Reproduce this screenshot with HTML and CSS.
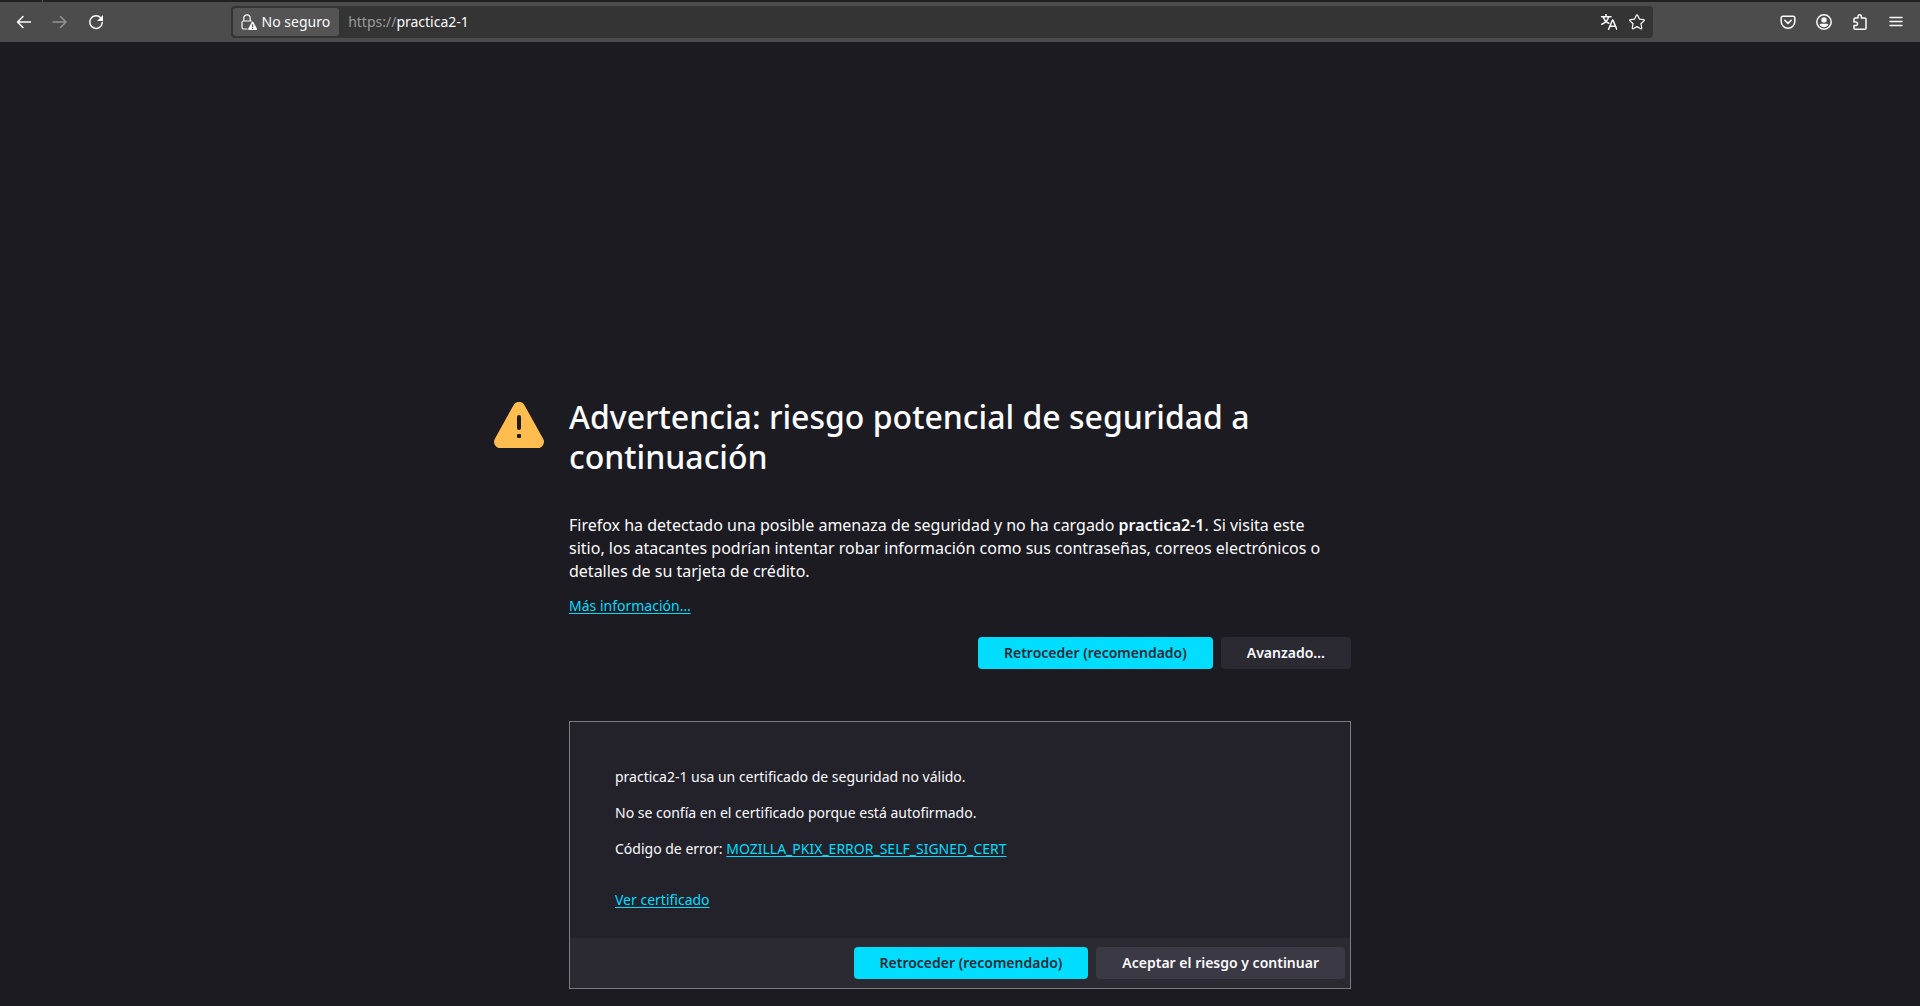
FILE: index.html
```html
<!DOCTYPE html>
<html lang="es">
<head>
<meta charset="utf-8">
<title>Advertencia: riesgo potencial de seguridad a continuación</title>
<link rel="stylesheet" href="styles.css">
</head>
<body>
<div class="tab-edge"></div>
<header class="toolbar">
  <nav class="nav-buttons" aria-label="Navegación">
    <button class="icon-button" type="button" aria-label="Atrás">
      <svg viewBox="0 0 16 16"><path class="line" d="M14.500 8H1.500M7 2.500 1.500 8 7 13.500"/></svg>
    </button>
    <button class="icon-button" type="button" aria-label="Adelante" disabled>
      <svg viewBox="0 0 16 16"><path class="line" d="M1 8h13M8.500 2.500 14 8l-5.500 5.500"/></svg>
    </button>
    <button class="icon-button" type="button" aria-label="Recargar">
      <svg viewBox="0 0 16 16"><path class="line" d="M12.800 4A6.300 6.300 0 1 0 14.300 8.500"/><path d="M15 1v5.400a.6.600 0 0 1-.6.600H9z"/></svg>
    </button>
  </nav>
  <div class="urlbar">
    <button class="identity" type="button">
      <svg viewBox="0 0 16 16"><path class="line thin" d="M6 15H2.500A1.500 1.500 0 0 1 1 13.500V8.500A1.500 1.500 0 0 1 2.500 7h7.800M2.800 7V4a3.200 3.200 0 0 1 6.400 0V7"/><path fill-rule="evenodd" d="M10.800 8.100a.9.900 0 0 1 1.600 0l3.500 6.500a.9.900 0 0 1-.8 1.300H8.100a.9.900 0 0 1-.8-1.300zM11 10.300v2.700h1.200v-2.700zm0 3.500v1.200h1.200v-1.200z"/></svg>
      <span>No seguro</span>
    </button>
    <div class="address"><span class="scheme">https://</span>practica2-1</div>
    <button class="icon-button small" type="button" aria-label="Traducir">
      <svg viewBox="0 0 16 16"><path class="line" d="M0 2.700h10M5 .2v2.500M7.700 2.700C7 6 4.500 8.800.8 10.200M2.300 2.700C3 5.500 5 8 7.700 9.300M7.500 15.500 11.500 6h.4l4 9.500M9 12.300h5.500"/></svg>
    </button>
    <button class="icon-button small" type="button" aria-label="Añadir a marcadores">
      <svg viewBox="0 0 16 16"><path class="line thin" d="M7.400 1.200a.7.700 0 0 1 1.200 0l1.800 3.900 4.300.5a.7.700 0 0 1 .4 1.200l-3.200 2.900.9 4.300a.7.700 0 0 1-1 .7L8 12.600l-3.800 2.100a.7.700 0 0 1-1-.7l.9-4.300L.9 6.800a.7.700 0 0 1 .4-1.200l4.300-.5z"/></svg>
    </button>
  </div>
  <div class="tools">
    <button class="icon-button" type="button" aria-label="Guardar en Pocket">
      <svg viewBox="0 0 16 16"><path class="line" d="M2.800 2.200h10.400a1.600 1.600 0 0 1 1.600 1.600v3.700a6.800 6.800 0 0 1-13.600 0V3.800a1.600 1.600 0 0 1 1.600-1.600zM4.800 6.300 8 9.400l3.200-3.100"/></svg>
    </button>
    <button class="icon-button" type="button" aria-label="Cuenta">
      <svg viewBox="0 0 16 16"><circle class="line" cx="8" cy="8" r="7.200"/><circle cx="8" cy="5.900" r="2.700"/><path d="M4.500 9.800h7a.8.800 0 0 1 .8.900C11.500 12.300 10 13.200 8 13.200s-3.500-.9-4.300-2.500a.8.800 0 0 1 .8-.9z"/></svg>
    </button>
    <button class="icon-button" type="button" aria-label="Extensiones">
      <svg viewBox="0 0 16 16"><path class="line" d="M2 7V5.200A1.200 1.200 0 0 1 3.200 4H6V2.500a1.700 1.700 0 0 1 3.400 0V4h3.400A1.200 1.200 0 0 1 14 5.200v9a1 1 0 0 1-1 1H3a1 1 0 0 1-1-1V11.500h1.700a1.800 1.800 0 0 0 0-3.600H2z"/></svg>
    </button>
    <button class="icon-button" type="button" aria-label="Menú">
      <svg viewBox="0 0 16 16"><path class="line" d="M2 3.500h12M2 7.500h12M2 11.500h12"/></svg>
    </button>
  </div>
</header>
<main class="page">
  <svg class="warning" viewBox="0 0 50 46" role="img" aria-label="Advertencia"><path fill="#ffbd4f" d="M19.500 3.200a6.200 6.200 0 0 1 11 0l18.600 33.500A6.200 6.200 0 0 1 43.700 46H6.300a6.200 6.200 0 0 1-5.400-9.300z"/><path stroke="#1c1b22" stroke-width="4" stroke-linecap="round" d="M25 15v11"/><rect x="23" y="32" width="4" height="4" rx="1" fill="#1c1b22"/></svg>
  <div class="column">
    <h1>Advertencia: riesgo potencial de seguridad a continuación</h1>
    <p class="intro">Firefox ha detectado una posible amenaza de seguridad y no ha cargado <b>practica2-1</b>. Si visita este sitio, los atacantes podrían intentar robar información como sus contraseñas, correos electrónicos o detalles de su tarjeta de crédito.</p>
    <p class="more"><a href="#info">Más información…</a></p>
    <div class="actions">
      <button class="button primary" type="button">Retroceder (recomendado)</button>
      <button class="button" type="button">Avanzado…</button>
    </div>
    <section class="advanced">
      <div class="details">
        <p>practica2-1 usa un certificado de seguridad no válido.</p>
        <p>No se confía en el certificado porque está autofirmado.</p>
        <p>Código de error: <a href="#error">MOZILLA_PKIX_ERROR_SELF_SIGNED_CERT</a></p>
        <p class="certificate"><a href="#certificado">Ver certificado</a></p>
      </div>
      <div class="actions footer">
        <button class="button primary" type="button">Retroceder (recomendado)</button>
        <button class="button" type="button">Aceptar el riesgo y continuar</button>
      </div>
    </section>
  </div>
</main>
</body>
</html>
```
FILE: styles.css
```css
* { box-sizing: border-box; }

body {
  margin: 0;
  background: #1c1b22;
  color: #fbfbfe;
  font: 14px/22px "Noto Sans", sans-serif;
}

button {
  font: inherit;
  color: inherit;
  border: 0;
  padding: 0;
}

.tab-edge {
  height: 2px;
  background: linear-gradient(90deg, #202020 42px, #606060 42px 43px, #202020 43px);
}

.toolbar {
  display: flex;
  align-items: center;
  height: 40px;
  padding: 0 8px;
  background: #4c4c4c;
}

.nav-buttons,
.tools {
  display: flex;
  gap: 4px;
}

.nav-buttons { flex: 223 1 0; }

.tools {
  flex: 260 1 0;
  justify-content: flex-end;
}

.icon-button {
  display: grid;
  place-items: center;
  width: 32px;
  height: 32px;
  background: none;
}

.icon-button.small { width: 28px; }
.icon-button:disabled { opacity: 0.4; }

.toolbar svg {
  width: 16px;
  height: 16px;
  fill: currentColor;
}

.toolbar .line {
  fill: none;
  stroke: currentColor;
  stroke-width: 1.5;
  stroke-linecap: round;
  stroke-linejoin: round;
}

.toolbar .thin { stroke-width: 1.2; }

.urlbar {
  display: flex;
  align-items: center;
  flex: 1421 1 0;
  height: 32px;
  padding: 2px;
  border-radius: 4px;
  background: #343434;
}

.identity {
  display: flex;
  align-items: center;
  gap: 5px;
  height: 28px;
  padding: 0 9px 0 8px;
  border-radius: 3px;
  background: #545454;
}

.address {
  flex: 1;
  padding-left: 9px;
}

.scheme { color: #9a9a9a; }

.page {
  display: flex;
  gap: 25px;
  justify-content: center;
  padding: 355px 75px 17px 0;
}

.warning {
  flex: none;
  width: 50px;
  height: 46px;
  margin-top: 5px;
}

.column {
  width: 100%;
  max-width: 782px;
}

h1,
p { margin: 0; }

h1 {
  font-size: 32px;
  line-height: 40px;
  font-weight: 500;
}

.intro {
  margin-top: 37px;
  padding-right: 20px;
  font-size: 16px;
  line-height: 23px;
}

.intro b { font-weight: 600; }
.more { margin-top: 12px; }

a {
  color: #00ddff;
  text-underline-offset: 2px;
}

.actions {
  display: flex;
  justify-content: flex-end;
  gap: 8px;
  margin-top: 20px;
}

.button {
  height: 32px;
  padding: 0 26px;
  border-radius: 4px;
  background: #2b2a33;
  font-weight: 600;
}

.button.primary {
  background: #00ddff;
  color: #2b2a33;
}

.advanced {
  margin-top: 52px;
  border: 1px solid #7c7c80;
  background: #23222b;
}

.details {
  display: grid;
  gap: 14px;
  padding: 44px 45px 27px;
}

.certificate { margin-top: 15px; }

.footer {
  margin-top: 0;
  padding: 9px 5px;
  background: #2b2a33;
}

.footer .button:not(.primary) { background: #3a3944; }
```
